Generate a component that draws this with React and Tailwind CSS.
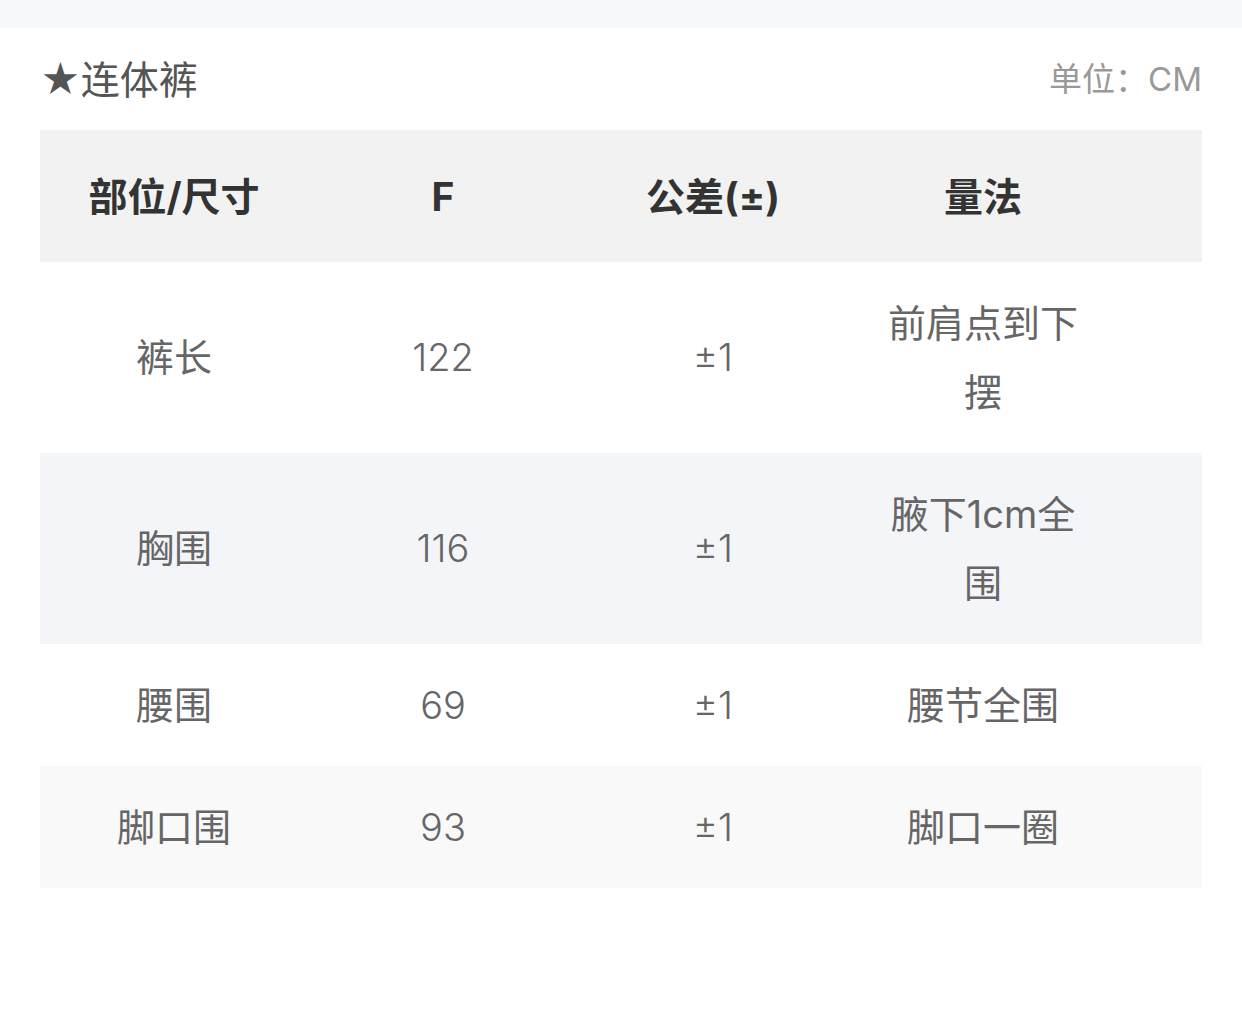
import React from "react";

const rows = [
  { part: "裤长", size: "122", tol: "±1", how: "前肩点到下摆", bg: "bg-white" },
  { part: "胸围", size: "116", tol: "±1", how: "腋下1cm全围", bg: "bg-[#f4f5f9]" },
  { part: "腰围", size: "69", tol: "±1", how: "腰节全围", bg: "bg-white" },
  { part: "脚口围", size: "93", tol: "±1", how: "脚口一圈", bg: "bg-[#f9f9f9]" },
];

const cols = "grid grid-cols-[268px_270px_270px_270px_1fr]";

const App = () => {
  return (
    <div
      className="min-h-[1027px] bg-white"
      style={{ fontFamily: 'Inter, "Noto Sans CJK SC", sans-serif' }}
    >
      {/* top strip */}
      <div className="h-[28px] bg-[#f7f8fa]" />

      <div className="px-[40px]">
        {/* title */}
        <div className="h-[102px] flex items-center justify-between">
          <div className="text-[39px] leading-none text-[#555]">★连体裤</div>
          <div className="text-[33px] leading-none text-[#999]">单位：CM</div>
        </div>

        {/* header */}
        <div className={`${cols} h-[132px] bg-[#f2f2f2] items-center text-[#333] font-bold text-[39px] leading-none text-center`}>
          <div>部位/尺寸</div>
          <div>F</div>
          <div>公差(±)</div>
          <div>量法</div>
          <div />
        </div>

        {/* body */}
        {rows.map((r) => (
          <div
            key={r.part}
            className={`${cols} ${r.bg} py-[26.5px] items-center text-center text-[38px] leading-[69px] text-[#666]`}
          >
            <div>{r.part}</div>
            <div className="font-light">{r.size}</div>
            <div className="font-light">{r.tol}</div>
            <div className="px-[35px]">{r.how}</div>
            <div />
          </div>
        ))}
      </div>
    </div>
  );
};

export default App;
